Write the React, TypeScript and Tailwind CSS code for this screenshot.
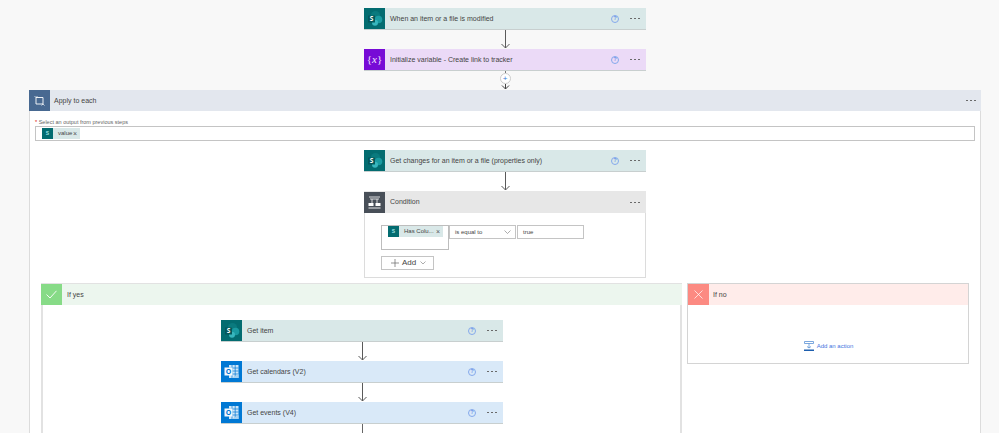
import React from "react";

const SP = ({ size = 21 }: { size?: number }) => (
  <svg width={size} height={size} viewBox="0 0 21 21" className="block shrink-0">
    <rect width="21" height="21" fill="#036c70" />
    <circle cx="11.5" cy="7.5" r="4.6" fill="#0a7a7e" />
    <circle cx="14.5" cy="11.5" r="3.8" fill="#1a9ba1" />
    <circle cx="11" cy="14.8" r="3" fill="#37b6bd" />
    <rect x="4" y="7.5" width="7" height="7" rx="0.6" fill="#04585b" />
    <text x="7.5" y="13" textAnchor="middle" fontSize="6.5" fontWeight="700" fill="#fff" fontFamily="'Open Sans', sans-serif">S</text>
  </svg>
);

const Outlook = () => (
  <svg width="21" height="21" viewBox="0 0 21 21" className="block shrink-0">
    <rect width="21" height="21" fill="#0078d4" />
    <rect x="8" y="4" width="9.5" height="13" fill="#cfe6f8" />
    <path d="M8 7h9.5M8 10h9.5M8 13h9.5M11 4v13M14.2 4v13" stroke="#0078d4" strokeWidth="0.7" />
    <path d="M11 17l6.5-4v4z" fill="#a6d3f2" />
    <rect x="3.5" y="6.5" width="8" height="8" fill="#f4f9fd" />
    <text x="7.5" y="13" textAnchor="middle" fontSize="7" fontWeight="700" fill="#0078d4" fontFamily="'Open Sans', sans-serif">O</text>
  </svg>
);

const VarIcon = () => (
  <div className="w-[21px] h-[21px] shrink-0 bg-[#770bd6] flex items-center justify-center text-[#f3e6ff] text-[11px] leading-none font-['Liberation_Serif',serif]">
    <span>{"{"}</span>
    <span className="italic">x</span>
    <span>{"}"}</span>
  </div>
);

const LoopIcon = () => (
  <div className="w-[21px] h-[21px] shrink-0 bg-[#486991] flex items-center justify-center">
    <svg width="11" height="11" viewBox="0 0 11 11" fill="none" stroke="#fff" strokeWidth="0.9">
      <path d="M2 2.5H9V9H2Z" />
      <path d="M0.5 1L2 2.5L3.5 1M7.5 10.5L9 9L10.5 10.5" strokeWidth="0.7" />
    </svg>
  </div>
);

const CondIcon = () => (
  <div className="w-[21px] h-[21px] shrink-0 bg-[#484f58] flex items-center justify-center">
    <svg width="13" height="13" viewBox="0 0 13 13" fill="none" stroke="#fff" strokeWidth="0.9">
      <path d="M1 1H12M2 3H11M4 3V7M9 3V7" strokeWidth="0.8" />
      <path d="M0.5 7H5.5V10H0.5ZM7.5 7H12.5V10H7.5Z" fill="#fff" stroke="none" />
      <path d="M0.5 12H12.5" />
    </svg>
  </div>
);

const Help = () => (
  <div className="w-[8px] h-[8px] rounded-full border border-[#85a9ec] flex items-center justify-center text-[5px] leading-none font-bold text-[#5c8de6] font-['Liberation_Sans',sans-serif]">
    ?
  </div>
);

const Dots = () => (
  <div className="flex gap-[2px]">
    <span className="w-[2px] h-[1px] bg-[#6a6a6a]" />
    <span className="w-[2px] h-[1px] bg-[#6a6a6a]" />
    <span className="w-[2px] h-[1px] bg-[#6a6a6a]" />
  </div>
);

const Card = ({ icon, title, bg }: { icon: React.ReactNode; title: string; bg: string }) => (
  <div className={`w-[282px] h-[22px] flex items-center shrink-0 border-b border-[#c8cfcf] ${bg}`}>
    {icon}
    <span className="ml-[5px] pt-[1px] flex-1 text-[7px] text-[#444] whitespace-nowrap">{title}</span>
    <Help />
    <div className="ml-[11px] mr-[6px]"><Dots /></div>
  </div>
);

const Arrow = () => (
  <svg width="11" height="19" viewBox="0 0 11 19" fill="none" stroke="#5a5a5a" strokeWidth="1" className="block shrink-0">
    <path d="M5.5 0V18M1.5 14L5.5 18L9.5 14" />
  </svg>
);

const Chip = ({ label, w }: { label: string; w: string }) => (
  <div className={`flex items-center h-[11px] bg-[#d9e8e8] ${w}`}>
    <div className="w-[11px] h-[11px] bg-[#036c70] flex items-center justify-center shrink-0">
      <span className="text-[5px] text-[#9fe0e4] font-bold leading-none">S</span>
    </div>
    <span className="ml-[5px] flex-1 text-[6px] text-[#444] whitespace-nowrap">{label}</span>
    <span className="text-[7px] leading-none text-[#555] pr-[3px]">×</span>
  </div>
);

export default function App() {
  return (
    <div className="w-[999px] h-[433px] overflow-hidden bg-[#f8f8f8] flex flex-col pt-[8px] font-['Liberation_Sans',sans-serif]">
      <div className="w-[952px] ml-[29px] flex flex-col items-center">
        <Card icon={<SP />} title="When an item or a file is modified" bg="bg-[#d9e8e8]" />
        <Arrow />
        <Card icon={<VarIcon />} title="Initialize variable - Create link to tracker" bg="bg-[#ebdaf7]" />
        <div className="h-[19px] shrink-0 flex flex-col items-center">
          <div className="w-[1px] h-[2px] bg-[#777]" />
          <div className="w-[11px] h-[11px] rounded-full bg-white border border-[#ccc] flex items-center justify-center text-[8px] leading-none text-[#3a78d6]">+</div>
          <svg width="9" height="6" viewBox="0 0 9 6" fill="none" stroke="#444" strokeWidth="1" className="block">
            <path d="M4.5 0V5M1 1.5L4.5 5L8 1.5" />
          </svg>
        </div>

        <div className="w-[952px] h-[400px] shrink-0 bg-white border-x border-[#dcdcdc] flex flex-col items-center">
          <div className="self-stretch -mx-[1px] h-[21px] shrink-0 flex items-center bg-[#e3e7ee]">
            <LoopIcon />
            <span className="ml-[4px] pt-[1px] flex-1 text-[7px] text-[#444]">Apply to each</span>
            <div className="pr-[5px]"><Dots /></div>
          </div>
          <div className="w-full px-[5px] pt-[8px] flex flex-col">
            <div className="text-[5.5px] leading-[7px] text-[#666] whitespace-nowrap"><span className="text-[#d00]">*</span> Select an output from previous steps</div>
            <div className="h-[15px] border border-[#c4c4c4] bg-white flex items-center pl-[6px]">
              <Chip label="value" w="w-[38px]" />
            </div>
          </div>
          <div className="h-[9px] shrink-0" />
          <Card icon={<SP />} title="Get changes for an item or a file (properties only)" bg="bg-[#d9e8e8]" />
          <Arrow />
          <div className="w-[282px] h-[87px] shrink-0 border border-[#dcdcdc] border-t-0 bg-white flex flex-col">
            <div className="h-[22px] flex items-center bg-[#e7e7e7] -mx-[1px]">
              <CondIcon />
              <span className="ml-[5px] pt-[1px] flex-1 text-[7px] text-[#444]">Condition</span>
              <div className="mr-[6px]"><Dots /></div>
            </div>
            <div className="pl-[16px] pt-[12px] flex flex-col">
              <div className="flex">
                <div className="w-[68px] h-[25px] border border-[#bdbdbd] bg-white">
                  <div className="pl-[6px]"><Chip label="Has Colu..." w="w-[55px]" /></div>
                </div>
                <div className="w-[67px] h-[14px] border border-[#c4c4c4] bg-white flex items-center pl-[5px] text-[6px] text-[#444]">
                  <span className="flex-1">is equal to</span>
                  <svg width="7" height="4" viewBox="0 0 7 4" fill="none" stroke="#888" strokeWidth="0.7" className="mr-[4px]"><path d="M0.5 0.5L3.5 3.5L6.5 0.5" /></svg>
                </div>
                <div className="w-[67px] h-[14px] ml-[1px] border border-[#c4c4c4] bg-white flex items-center pl-[5px] text-[6px] text-[#444]">true</div>
              </div>
              <div className="mt-[6px] w-[53px] h-[14px] border border-[#c4c4c4] bg-white flex items-center pl-[9px] gap-[3px]">
                <svg width="8" height="8" viewBox="0 0 8 8" fill="none" stroke="#666" strokeWidth="0.7"><path d="M4 0V8M0 4H8" /></svg>
                <span className="text-[8px] leading-none text-[#444]">Add</span>
                <svg width="6" height="4" viewBox="0 0 6 4" fill="none" stroke="#888" strokeWidth="0.7" className="ml-[1px]"><path d="M0.5 0.5L3 3L5.5 0.5" /></svg>
              </div>
            </div>
          </div>

          <div className="self-start ml-[11px] mt-[5px] flex gap-[5px] items-start">
            <div className="w-[641px] h-[160px] shrink-0 border-t border-x-2 border-[#e2e2e2] bg-white flex flex-col items-center pl-[1px]">
              <div className="self-stretch -ml-[3px] -mr-[2px] h-[21px] shrink-0 flex items-center bg-[#ecf6ee]">
                <div className="w-[21px] h-[21px] bg-[#87db87] flex items-center justify-center">
                  <svg width="11" height="9" viewBox="0 0 11 9" fill="none" stroke="#fff" strokeWidth="0.9"><path d="M0.5 4.5L4 8L10.5 0.8" /></svg>
                </div>
                <span className="ml-[5px] pt-[1px] text-[7px] text-[#444]">If yes</span>
              </div>
              <div className="h-[15px] shrink-0" />
              <Card icon={<SP />} title="Get item" bg="bg-[#d9e8e8]" />
              <Arrow />
              <Card icon={<Outlook />} title="Get calendars (V2)" bg="bg-[#d9e9f8]" />
              <Arrow />
              <Card icon={<Outlook />} title="Get events (V4)" bg="bg-[#d9e9f8]" />
              <div className="w-[1px] h-[20px] shrink-0 bg-[#666]" />
            </div>
            <div className="w-[282px] h-[81px] shrink-0 border border-[#d4d4d4] bg-white flex flex-col">
              <div className="h-[21px] shrink-0 flex items-center bg-[#ffecea]">
                <div className="w-[21px] h-[21px] bg-[#fc8a82] flex items-center justify-center">
                  <svg width="9" height="9" viewBox="0 0 9 9" fill="none" stroke="#fff" strokeWidth="0.7"><path d="M0.5 0.5L8.5 8.5M8.5 0.5L0.5 8.5" /></svg>
                </div>
                <span className="ml-[4px] pt-[1px] text-[7px] text-[#444]">If no</span>
              </div>
              <div className="flex-1 flex items-start justify-center pt-[36px] gap-[3px] pl-[1px]">
                <svg width="10" height="10" viewBox="0 0 10 10" fill="none" className="block">
                  <path d="M0.5 0.5H9.5V2.5H0.5ZM5 2.5V7M3 5.5L5 7L7 5.5" stroke="#5b92d6" strokeWidth="0.8" />
                  <rect x="0" y="8.5" width="10" height="1.5" fill="#1d5fae" />
                </svg>
                <span className="text-[6px] leading-[10px] text-[#3f74e0]">Add an action</span>
              </div>
            </div>
          </div>
        </div>
      </div>
    </div>
  );
}
